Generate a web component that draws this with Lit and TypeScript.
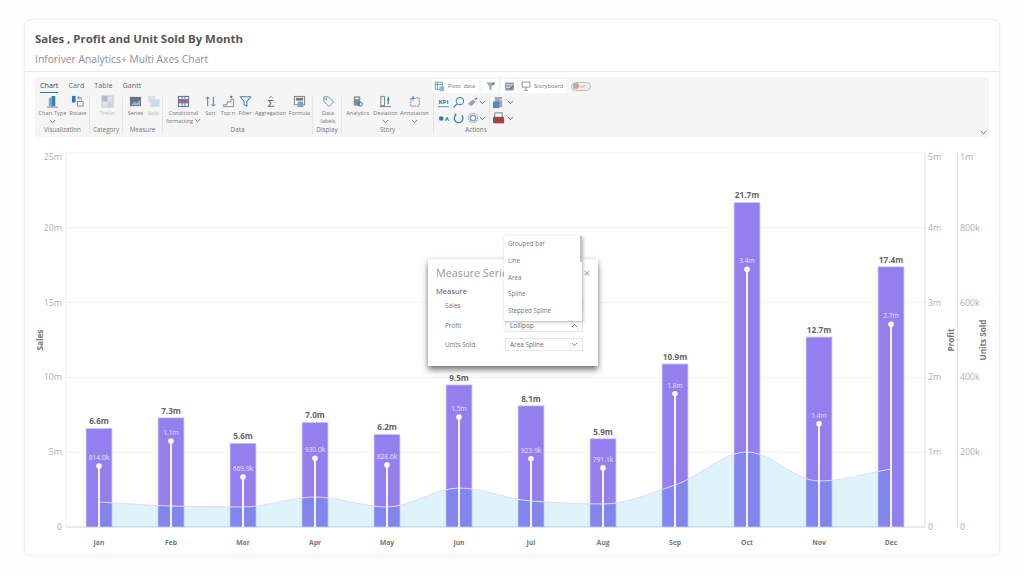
import { LitElement, css, html, svg } from "lit";
import { customElement } from "lit/decorators.js";

const MONTHS = ["Jan", "Feb", "Mar", "Apr", "May", "Jun", "Jul", "Aug", "Sep", "Oct", "Nov", "Dec"];
const SALES = [6.6, 7.3, 5.6, 7.0, 6.2, 9.5, 8.1, 5.9, 10.9, 21.7, 12.7, 17.4];
const PROFIT = [0.814, 1.15, 0.668, 0.92, 0.83, 1.47, 0.913, 0.79, 1.78, 3.445, 1.38, 2.71];
const PROFIT_LABEL = ["814.0k", "1.1m", "669.9k", "930.0k", "828.6k", "1.5m", "923.9k", "791.1k", "1.8m", "3.4m", "1.4m", "2.7m"];
const UNITS_Y = [502, 506, 507, 497, 507, 488, 501, 504, 485, 452, 481, 469];

const BASE = 527;
const TOP = 153;
const PER_M = (BASE - TOP) / 25;
const PROFIT_PER_M = (BASE - TOP) / 5;
const cx = (i: number) => 99 + i * 72;

// monotone spline through the unit points, flat at the turning points
function areaPath() {
  const ys = UNITS_Y;
  const slope = ys.map((y, i) => {
    if (i === 0 || i === ys.length - 1) {
      return i === 0 ? (ys[1] - y) / 72 : (y - ys[i - 1]) / 72;
    }
    const a = (y - ys[i - 1]) / 72;
    const b = (ys[i + 1] - y) / 72;
    return a * b <= 0 ? 0 : (2 * a * b) / (a + b);
  });
  let d = `M${cx(0)} ${ys[0]}`;
  for (let i = 1; i < ys.length; i++) {
    const h = 24;
    d += ` C${cx(i - 1) + h} ${ys[i - 1] + slope[i - 1] * h} ${cx(i) - h} ${ys[i] - slope[i] * h} ${cx(i)} ${ys[i]}`;
  }
  return d;
}

const ICONS: Record<string, unknown> = {
  chart: svg`<rect x="3" y="3" width="3" height="9" fill="#7fa6cf"/><rect x="6" y="1" width="4" height="11" fill="#3f7db8"/><path d="M1 13h12" stroke="#777"/>`,
  rotate: svg`<rect x="1" y="1" width="4" height="7" fill="#2f78c0"/><rect x="7" y="7" width="6" height="5" fill="none" stroke="#888"/><path d="M7 3h4v3M7 3l2-2M7 3l2 2" fill="none" stroke="#888"/>`,
  trellis: svg`<rect x="1" y="1" width="12" height="12" fill="#dbe3ea" stroke="#c4ccd3"/><rect x="1" y="1" width="6" height="6" fill="#b4bec6"/><rect x="7" y="7" width="6" height="6" fill="#ccd5dc"/>`,
  series: svg`<rect x="1" y="2" width="12" height="10" fill="#6a747e"/><path d="M2 11l4-4 2 2 4-4v6z" fill="#8fb3d6"/>`,
  split: svg`<rect x="1" y="1" width="8" height="7" fill="#dbe1e6"/><rect x="4" y="5" width="9" height="7" fill="#c6dbec" stroke="#d2d9de"/>`,
  cond: svg`<rect x="1.500" y="1.500" width="11" height="11" fill="#eaf0f6" stroke="#4a6c98"/><rect x="2" y="5" width="10" height="3.500" fill="#de5b66"/><path d="M5.500 1.500v11M8.500 1.500v11M1.500 5h11M1.500 8.500h11" stroke="#4a6c98" stroke-width=".8"/>`,
  sort: svg`<path d="M4 12V2M2 4l2-2 2 2" fill="none" stroke="#666"/><path d="M10 2v10M8 10l2 2 2-2" fill="none" stroke="#2f78c0"/>`,
  topn: svg`<path d="M1.500 12.500h11v-8h-3v3h-4v3h-4z" fill="none" stroke="#888"/><circle cx="10" cy="2" r="1.300" fill="#2f78c0"/>`,
  filter: svg`<path d="M1.500 2h11l-4 5v5l-3-1.500V7z" fill="none" stroke="#3b82c4" stroke-width="1.100"/>`,
  sigma: svg`<path d="M10 6H5l2.500 3L5 12h6" fill="none" stroke="#666" stroke-width="1.100"/><path d="M5.500 3.500L7.500 1.500l2 2" fill="none" stroke="#2f78c0" stroke-width=".9"/>`,
  formula: svg`<rect x="1.500" y="1.500" width="11" height="9" fill="#fff" stroke="#777"/><rect x="3" y="3" width="8" height="3" fill="#777"/><rect x="5" y="7" width="6" height="6" fill="#7ba3cc"/>`,
  tag: svg`<path d="M2 2h5l5.500 5.500-5 5L2 7z" fill="#eef3f8" stroke="#6b8fb3"/><circle cx="4.500" cy="4.500" r="1" fill="#6b8fb3"/>`,
  analytics: svg`<rect x="3" y="1.500" width="7" height="10" fill="#7d8d9d"/><rect x="4.500" y="3" width="4" height="1.500" fill="#fff"/><circle cx="10" cy="10" r="2.200" fill="none" stroke="#2f78c0"/>`,
  deviation: svg`<path d="M2 1.500h4v10H2z" fill="none" stroke="#777"/><path d="M10 2v8" stroke="#2f78c0" stroke-width="1.200"/><circle cx="10" cy="5" r="1.200" fill="#2f78c0"/><path d="M1 12.500h12" stroke="#777"/>`,
  annotation: svg`<path d="M3 4v8h9V3H9" fill="none" stroke="#777" stroke-dasharray="2 1"/><path d="M5.500 1v5M3 3.500h5" stroke="#2f78c0"/>`,
  kpi: svg`<text x="7" y="8.500" font-size="6.500" font-weight="700" text-anchor="middle" fill="#3c6a9e" font-family="Open Sans">KPI</text><path d="M1 11.500h12" stroke="#4d8cc8"/>`,
  search: svg`<circle cx="8.500" cy="5.500" r="4" fill="none" stroke="#3b82c4" stroke-width="1.100"/><path d="M5.500 8.500L1.500 12.500" stroke="#3b82c4" stroke-width="1.300"/>`,
  brush: svg`<path d="M1 9l6-5 3 3-5 5z" fill="#97a3ae"/><path d="M9 4l3-2" stroke="#2f78c0" stroke-width="1.500"/>`,
  dota: svg`<circle cx="4.500" cy="7" r="2.500" fill="#2f78c0"/><text x="10.500" y="9.500" font-size="6.500" font-weight="700" text-anchor="middle" fill="#4a6a8a" font-family="Open Sans">A</text>`,
  refresh: svg`<path d="M10.500 3.500a4.700 4.700 0 1 1-6-.6" fill="none" stroke="#2f78c0" stroke-width="1.300"/><path d="M3 1l2 2-2 1.500z" fill="#2f78c0"/>`,
  gear: svg`<circle cx="7" cy="7" r="3.200" fill="none" stroke="#8fa0b0" stroke-width="1.800"/><circle cx="7" cy="7" r="5.500" fill="none" stroke="#8fa0b0" stroke-width="1.300" stroke-dasharray="1.600 1.300"/>`,
  export: svg`<rect x="3" y="1" width="8" height="11" fill="#9babba"/><rect x="1" y="6" width="7" height="7" fill="#6384ab"/><path d="M9 4h3" stroke="#fff"/>`,
  pdf: svg`<rect x="3" y="1" width="8" height="5" fill="#fff" stroke="#777"/><rect x="1" y="5" width="12" height="7" rx="1" fill="#666"/><rect x="3" y="7" width="10" height="5" fill="#c8323a"/>`,
  pivot: svg`<rect x="1.500" y="1.500" width="9" height="9" fill="#fff" stroke="#4d8cc8"/><path d="M1.500 4.500h9M4.500 1.500v9" stroke="#4d8cc8"/><rect x="7" y="7" width="6" height="6" fill="#93b6d8"/>`,
  funnel: svg`<path d="M1.500 2h11l-4 5v5l-3-1.500V7z" fill="#a1abb5"/><circle cx="10.500" cy="3.500" r="1.800" fill="#4d8cc8"/>`,
  edit: svg`<rect x="1.500" y="2" width="11" height="10" fill="#8f9ba7"/><path d="M3 5h8M3 8h5" stroke="#fff"/><path d="M7 11l5-5" stroke="#3b82c4" stroke-width="1.500"/>`,
  board: svg`<rect x="1.500" y="1.500" width="11" height="7" fill="#fff" stroke="#777"/><path d="M7 8.500V13M4 13h6" stroke="#777"/>`,
};

const icon = (name: string, size = 13) =>
  html`<svg class="ico" width=${size} height=${size} viewBox="0 0 14 14">${ICONS[name]}</svg>`;
const chev = html`<svg class="chev" width="7" height="5" viewBox="0 0 7 5"><path d="M.8 1l2.700 2.700L6.200 1" fill="none" stroke="#666" stroke-width=".9"/></svg>`;

interface Item {
  icon: string;
  label: string;
  width: number;
  more?: boolean;
  inline?: boolean;
  off?: boolean;
}

const GROUPS: { name: string; width: number; pad?: number; items: Item[] }[] = [
  { name: "Visualization", width: 54, items: [
    { icon: "chart", label: "Chart Type", width: 30, more: true },
    { icon: "rotate", label: "Rotate", width: 23 },
  ] },
  { name: "Category", width: 33, items: [{ icon: "trellis", label: "Trellis", width: 26, off: true }] },
  { name: "Measure", width: 40, items: [
    { icon: "series", label: "Series", width: 20 },
    { icon: "split", label: "Split", width: 16, off: true },
  ] },
  { name: "Data", width: 150, items: [
    { icon: "cond", label: "Conditional formatting", width: 36, more: true, inline: true },
    { icon: "sort", label: "Sort", width: 18 },
    { icon: "topn", label: "Top n", width: 17 },
    { icon: "filter", label: "Filter", width: 17 },
    { icon: "sigma", label: "Aggregation", width: 34 },
    { icon: "formula", label: "Formula", width: 24 },
  ] },
  { name: "Display", width: 29, items: [{ icon: "tag", label: "Data labels", width: 24 }] },
  { name: "Story", width: 92, pad: 4, items: [
    { icon: "analytics", label: "Analytics", width: 28 },
    { icon: "deviation", label: "Deviation", width: 29, more: true },
    { icon: "annotation", label: "Annotation", width: 30, more: true },
  ] },
];

@customElement("app-root")
export class AppRoot extends LitElement {
  static styles = css`
    :host {
      display: block;
      height: 576px;
      background: #fdfdfd;
      font-family: "Open Sans", "Liberation Sans", sans-serif;
      overflow: hidden;
    }
    .card {
      box-sizing: border-box;
      height: 537px;
      margin: 19px 24px 0;
      background: #fff;
      border: 1px solid #eee;
      border-radius: 8px;
      box-shadow: 0 1px 3px rgba(0, 0, 0, 0.04);
      display: flex;
      flex-direction: column;
    }
    .head {
      height: 52px;
      box-sizing: border-box;
      padding: 11px 10px 0;
      border-bottom: 1px solid #e9e9e9;
    }
    .title {
      font-size: 11.450px;
      line-height: 16px;
      font-weight: 700;
      color: #555;
    }
    .sub {
      margin-top: 5px;
      font-size: 10.300px;
      line-height: 14px;
      color: #8f8f8f;
    }
    .ribbon {
      margin: 5px 10px 0;
      height: 60px;
      background: #f5f5f5;
      position: relative;
    }
    .top {
      display: flex;
      align-items: center;
      height: 18px;
      padding: 0 0 0 5px;
    }
    .tabs {
      display: flex;
      gap: 10px;
      font-size: 7.200px;
      color: #666;
      width: 392px;
    }
    .tab {
      height: 13px;
      line-height: 12px;
    }
    .tab.on {
      color: #444;
      border-bottom: 1.500px solid #1e7fc8;
    }
    .btn {
      box-sizing: border-box;
      display: flex;
      align-items: center;
      gap: 3px;
      height: 14px;
      padding: 0 2px;
      margin-right: 3px;
      background: #fff;
      font-size: 5.600px;
      word-spacing: 1px;
      color: #777;
    }
    .btn.square {
      width: 16px;
      justify-content: center;
      padding: 0;
    }
    .btn.wide {
      width: 47px;
    }
    .toggle {
      margin-left: 2px;
      width: 20px;
      height: 9px;
      box-sizing: border-box;
      border: 1px solid #bbb;
      border-radius: 5px;
      background: #eee;
      display: flex;
      align-items: center;
      gap: 1px;
      padding-left: 1px;
      font-size: 3.600px;
      color: #aaa;
    }
    .knob {
      width: 6px;
      height: 6px;
      border-radius: 50%;
      background: #d0a287;
    }
    .groups {
      display: flex;
      height: 39px;
      padding-left: 1px;
    }
    .group {
      box-sizing: border-box;
      display: flex;
      flex-direction: column;
      border-right: 1px solid #e4e4e4;
    }
    .items {
      box-sizing: border-box;
      height: 31px;
      display: flex;
      justify-content: center;
      padding-left: 2px;
    }
    .item {
      display: flex;
      flex-direction: column;
      align-items: center;
      font-size: 5.500px;
      line-height: 7.500px;
      color: #777;
      text-align: center;
    }
    .item.off {
      color: #c0c0c0;
    }
    .ico {
      display: block;
      flex: none;
    }
    .item .ico {
      margin-bottom: 2px;
    }
    .chev {
      display: block;
      margin: 1px auto 0;
    }
    .item span .chev {
      display: inline-block;
      margin: 0 0 0 1px;
    }
    .gname {
      font-size: 6.300px;
      line-height: 8px;
      text-align: center;
      color: #777;
      white-space: nowrap;
    }
    .actions {
      width: 84px;
      height: 40px;
      display: grid;
      grid-template-columns: 15px 15px 22px 1fr;
      grid-template-rows: 16px 16px 8px;
      align-items: center;
      justify-items: start;
      padding-left: 3px;
      margin-top: -1px;
      box-sizing: border-box;
    }
    .actions .gname {
      grid-column: 1 / -1;
      justify-self: stretch;
      padding-right: 3px;
    }
    .pair {
      display: flex;
      align-items: center;
      gap: 0;
    }
    .pair .chev {
      margin: 0;
    }
    .last {
      align-self: stretch;
      gap: 2px;
      padding-left: 2px;
      border-left: 1px solid #e4e4e4;
    }
    .collapse {
      position: absolute;
      right: 2px;
      bottom: 2px;
    }
    .chart {
      flex: 1;
      position: relative;
      min-height: 0;
    }
    .chart > svg {
      display: block;
      position: absolute;
      left: -1px;
      top: 0;
    }
    .tick {
      font-size: 8.800px;
      fill: #b0b0b0;
    }
    .axis {
      font-size: 8.200px;
      font-weight: 700;
      fill: #777;
    }
    .bar {
      font-size: 8.200px;
      font-weight: 700;
      fill: #666;
    }
    .month {
      font-size: 6.800px;
      font-weight: 700;
      fill: #777;
    }
    .lolli {
      font-size: 6.700px;
      fill: #e8e4fb;
    }
    .dialog {
      position: absolute;
      left: 403px;
      top: 122px;
      width: 170px;
      height: 107px;
      box-sizing: border-box;
      padding: 7px 8px;
      background: #fff;
      box-shadow: 0 4px 6px rgba(0, 0, 0, 0.5), 0 0 3px rgba(0, 0, 0, 0.12);
    }
    .dlg-title {
      font-size: 10.800px;
      line-height: 14px;
      color: #999;
    }
    .close {
      position: absolute;
      right: 8px;
      top: 6px;
      font-size: 11px;
      color: #999;
    }
    .dlg-h {
      margin-top: 6px;
      font-size: 7.600px;
      line-height: 10px;
      color: #555;
    }
    .rows {
      display: grid;
      grid-template-columns: 69px 78px;
      grid-auto-rows: 19.500px;
      align-items: center;
      font-size: 6.400px;
      color: #777;
    }
    .rows .lab {
      padding-left: 9px;
    }
    .sel {
      box-sizing: border-box;
      height: 13px;
      display: flex;
      align-items: center;
      justify-content: space-between;
      padding: 0 4px;
      border: 1px solid #e8e8e8;
      color: #666;
    }
    .sel .chev {
      margin: 0;
    }
    .menu {
      position: absolute;
      left: 76px;
      top: -23px;
      width: 78px;
      height: 85px;
      box-sizing: border-box;
      background: #fff;
      box-shadow: 1px 1px 3px rgba(0, 0, 0, 0.3);
      font-size: 6.200px;
      color: #777;
    }
    .menu div {
      height: 16.800px;
      line-height: 16.800px;
      padding-left: 4px;
    }
    .scroll {
      position: absolute;
      right: 0;
      top: 0;
      width: 2px;
      height: 26px;
      background: #c4c4c4;
    }
  `;

  private renderChart() {
    const grid = [0, 1, 2, 3, 4, 5];
    const area = areaPath();
    const fill = `${area} L${cx(11)} ${BASE} L${cx(0)} ${BASE} Z`;
    return html`<svg width="976" height="418" viewBox="24 137 976 418">
      ${grid.map((g) => {
        const y = BASE - g * 74.8;
        const ty = g === 5 ? y + 7 : y + 3;
        return svg`
          <line x1="66" x2="925" y1=${y} y2=${y} stroke=${g === 0 ? "#e2e2e2" : "#f0f0f0"} stroke-width=${g === 0 ? 1.5 : 1}/>
          <text class="tick" x="62" y=${ty} text-anchor="end">${g === 0 ? "0" : g * 5 + "m"}</text>
          <text class="tick" x="928" y=${ty}>${g === 0 ? "0" : g + "m"}</text>
          <text class="tick" x="960" y=${ty}>${g === 0 ? "0" : g === 5 ? "1m" : g * 200 + "k"}</text>
        `;
      })}
      <line x1="66" x2="66" y1="153" y2="527" stroke="#eee"/>
      <line x1="925" x2="925" y1="153" y2="527" stroke="#ddd"/>
      <line x1="957.500" x2="957.500" y1="153" y2="527" stroke="#ddd"/>
      <text class="axis" text-anchor="middle" transform="translate(43 340) rotate(-90)">Sales</text>
      <text class="axis" text-anchor="middle" transform="translate(954 340) rotate(-90)">Profit</text>
      <text class="axis" text-anchor="middle" transform="translate(986 340) rotate(-90)">Units Sold</text>
      ${SALES.map((v, i) => {
        const y = BASE - v * PER_M;
        return svg`
          <rect x=${cx(i) - 13} y=${y} width="26" height=${BASE - y} fill="#947fee" stroke="#d9d2fa" stroke-width=".8"/>
          <text class="bar" x=${cx(i)} y=${y - 4} text-anchor="middle">${v.toFixed(1)}m</text>
          <text class="month" x=${cx(i)} y="544.500" text-anchor="middle">${MONTHS[i]}</text>
        `;
      })}
      <path d=${fill} fill="#1baaf3" fill-opacity=".14"/>
      <path d=${area} fill="none" stroke="#e0dcf9" stroke-width="1"/>
      ${PROFIT.map((v, i) => {
        const y = BASE - v * PROFIT_PER_M;
        return svg`
          <line x1=${cx(i)} x2=${cx(i)} y1=${y} y2=${BASE} stroke="#fff" stroke-width="1.800"/>
          <circle cx=${cx(i)} cy=${y} r="2.800" fill="#fff"/>
          <text class="lolli" x=${cx(i)} y=${y - 6} text-anchor="middle">${PROFIT_LABEL[i]}</text>
        `;
      })}
    </svg>`;
  }

  private renderGroup(g: (typeof GROUPS)[number]) {
    return html`<div class="group" style="width:${g.width}px">
      <div class="items" style="padding-right:${g.pad ?? 0}px">
        ${g.items.map(
          (it) => html`<div class="item ${it.off ? "off" : ""}" style="width:${it.width}px">
            ${icon(it.icon)}<span>${it.label}${it.inline ? chev : ""}</span>${it.more && !it.inline ? chev : ""}
          </div>`
        )}
      </div>
      <div class="gname">${g.name}</div>
    </div>`;
  }

  render() {
    return html`<div class="card">
      <div class="head">
        <div class="title">Sales , Profit and Unit Sold By Month</div>
        <div class="sub">Inforiver Analytics+ Multi Axes Chart</div>
      </div>
      <div class="ribbon">
        <div class="top">
          <div class="tabs">
            <span class="tab on">Chart</span><span class="tab">Card</span><span class="tab">Table</span><span class="tab">Gantt</span>
          </div>
          <div class="btn wide">${icon("pivot", 11)}<span>Pivot data</span></div>
          <div class="btn square">${icon("funnel", 11)}</div>
          <div class="btn square">${icon("edit", 11)}</div>
          <div class="btn wide" style="margin-left:-1px">${icon("board", 10)}<span>Storyboard</span></div>
          <div class="toggle"><div class="knob"></div>Off</div>
        </div>
        <div class="groups">
          ${GROUPS.map((g) => this.renderGroup(g))}
          <div class="actions">
            ${icon("kpi")}${icon("search")}
            <div class="pair">${icon("brush", 12)}${chev}</div>
            <div class="pair last">${icon("export")}${chev}</div>
            ${icon("dota")}${icon("refresh")}
            <div class="pair">${icon("gear", 12)}${chev}</div>
            <div class="pair last">${icon("pdf")}${chev}</div>
            <div class="gname">Actions</div>
          </div>
        </div>
        <div class="collapse">${chev}</div>
      </div>
      <div class="chart">
        ${this.renderChart()}
        <div class="dialog">
          <div class="dlg-title">Measure Series</div>
          <div class="close">×</div>
          <div class="dlg-h">Measure</div>
          <div class="rows">
            <span class="lab">Sales</span><div class="sel"></div>
            <span class="lab">Profit</span>
            <div class="sel"><span>Lollipop</span><svg class="chev" width="7" height="5" viewBox="0 0 7 5"><path d="M.8 4l2.700-2.700L6.200 4" fill="none" stroke="#666" stroke-width=".9"/></svg></div>
            <span class="lab">Units Sold</span>
            <div class="sel"><span>Area Spline</span>${chev}</div>
          </div>
          <div class="menu">
            <div>Grouped bar</div><div>Line</div><div>Area</div><div>Spline</div><div>Stepped Spline</div>
            <span class="scroll"></span>
          </div>
        </div>
      </div>
    </div>`;
  }
}
